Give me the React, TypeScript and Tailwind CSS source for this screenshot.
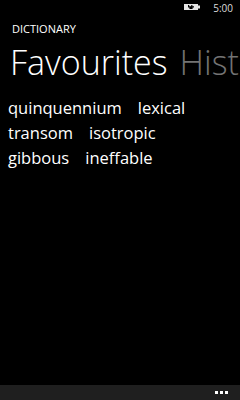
export default function App() {
  const rows = [
    ["quinquennium", "lexical"],
    ["transom", "isotropic"],
    ["gibbous", "ineffable"],
  ];

  return (
    <div
      className="flex h-[400px] w-[240px] flex-col overflow-hidden bg-black text-white"
      style={{ fontFamily: '"Open Sans", "Noto Sans", sans-serif' }}
    >
      {/* Status bar */}
      <div className="flex h-[16px] items-center justify-end gap-[12px] pr-[7px]">
        <svg width="17" height="7" viewBox="0 0 17 7" className="mb-[1px]">
          <rect x="0" y="0" width="14" height="6" fill="#e6e6e6" />
          <rect x="14" y="1.5" width="2" height="3" fill="#e6e6e6" />
          <path d="M4 1h1.2v1.3h2V1h1.2v1.3H10v1.2H8.6V5H5.4V3.5H4z" fill="#000" />
        </svg>
        <span className="text-[10px] leading-none text-[#dcdcdc]">5:00</span>
      </div>

      {/* App title */}
      <div className="mt-[6px] pl-[12px] text-[11px] leading-[14px]">DICTIONARY</div>

      {/* Pivot headers */}
      <div className="mt-[5px] flex gap-[12px] whitespace-nowrap pl-[10px] text-[34px] font-light leading-[42px]">
        <span>Favourites</span>
        <span className="text-[#737373]">History</span>
      </div>

      {/* Words */}
      <div className="mt-[12px] flex flex-col pl-[8px] text-[16.5px] leading-[25px]">
        {rows.map((r) => (
          <div key={r[0]} className="flex gap-[16px]">
            <span>{r[0]}</span>
            <span>{r[1]}</span>
          </div>
        ))}
      </div>

      <div className="flex-1" />

      {/* App bar */}
      <div className="flex h-[15px] items-center justify-end gap-[2px] bg-[#1f1f1f] pr-[12px]">
        <span className="h-[3px] w-[3px] bg-white" />
        <span className="h-[3px] w-[3px] bg-white" />
        <span className="h-[3px] w-[3px] bg-white" />
      </div>
    </div>
  );
}
